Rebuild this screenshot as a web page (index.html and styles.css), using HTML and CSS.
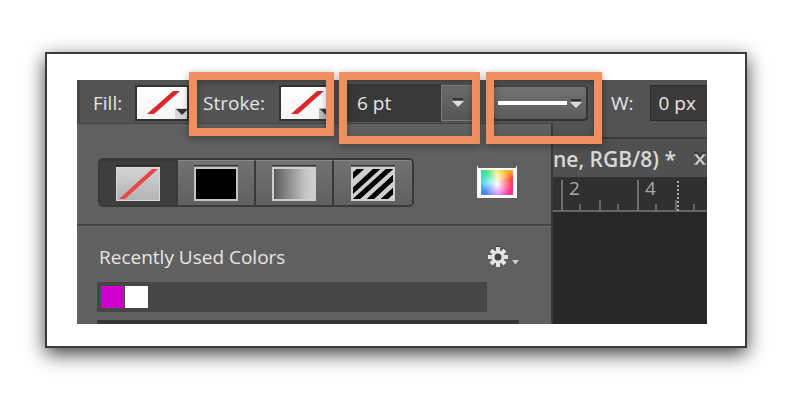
FILE: index.html
```html
<!DOCTYPE html>
<html lang="en">
<head>
    <meta charset="utf-8">
    <title>Stroke options</title>
    <link rel="stylesheet" href="styles.css">
</head>
<body>
    <main class="card">
        <div class="app">
            <div class="toolbar">
                <div class="field fill">
                    <label for="fillBtn">Fill:</label>
                    <button id="fillBtn" class="swatch-btn">
                        <svg width="53" height="32" viewBox="0 0 53 32">
                            <path d="M10 27L36 4h7L17 27z" fill="#d8282c"/>
                            <path d="M38 21h15v11H38z" fill="#d8d8d8"/>
                            <path d="M39 22h12l-6 6z" fill="#333"/>
                        </svg>
                    </button>
                </div>

                <div class="field stroke highlight">
                    <label for="strokeBtn">Stroke:</label>
                    <button id="strokeBtn" class="swatch-btn">
                        <svg width="53" height="32" viewBox="0 0 53 32">
                            <path d="M10 27L36 4h7L17 27z" fill="#d8282c"/>
                            <path d="M38 21h15v11H38z" fill="#bbb"/>
                            <path d="M39 22h12l-6 6z" fill="#333"/>
                        </svg>
                    </button>
                </div>

                <div class="field size highlight">
                    <input type="text" value="6 pt" aria-label="Stroke width">
                    <button class="size-btn" aria-label="Choose stroke width">
                        <svg width="14" height="10" viewBox="0 0 14 10">
                            <path d="M2 0h10v2H2z" fill="#333"/>
                            <path d="M1 3h12L7 9z" fill="#ddd"/>
                        </svg>
                    </button>
                </div>

                <div class="field line highlight">
                    <button class="line-btn" aria-label="Stroke type">
                        <svg width="86" height="12" viewBox="0 0 86 12">
                            <path d="M2 4h69v4H2z" fill="#fff"/>
                            <path d="M75 2h10v2H75z" fill="#333"/>
                            <path d="M74 5h12l-6 6z" fill="#ddd"/>
                        </svg>
                    </button>
                </div>

                <div class="field width">
                    <label for="shapeWidth">W:</label>
                    <input type="text" id="shapeWidth" value="0 px">
                </div>
            </div>

            <section class="panel">
                <div class="types">
                    <div class="type-group">
                        <button class="type active" aria-label="No color">
                            <svg width="44" height="36" viewBox="0 0 44 36">
                                <defs>
                                    <linearGradient id="none" x1="0" y1="0" x2="0" y2="1">
                                        <stop offset="0" stop-color="#d2d2d2"/>
                                        <stop offset="1" stop-color="#b4b4b4"/>
                                    </linearGradient>
                                </defs>
                                <path d="M0 0h44v1H0z" fill="#222"/>
                                <path d="M0 2h44v34H0z" fill="#d9d9d9"/>
                                <path d="M1 3h42v32H1z" fill="url(#none)"/>
                                <path d="M3 34L36 4h6L9 34z" fill="#e8474a"/>
                            </svg>
                        </button>
                        <button class="type" aria-label="Solid color">
                            <svg width="44" height="36" viewBox="0 0 44 36">
                                <path d="M0 0h44v1H0z" fill="#333"/>
                                <path d="M0 2h44v34H0z" fill="#c4c4c4"/>
                                <path d="M2 4h40v30H2z" fill="#000"/>
                            </svg>
                        </button>
                        <button class="type" aria-label="Gradient">
                            <svg width="44" height="36" viewBox="0 0 44 36">
                                <defs>
                                    <linearGradient id="grad">
                                        <stop offset="0" stop-color="#5c5c5c"/>
                                        <stop offset="0.8" stop-color="#c6c6c6"/>
                                        <stop offset="1" stop-color="#d0d0d0"/>
                                    </linearGradient>
                                </defs>
                                <path d="M0 0h44v1H0z" fill="#333"/>
                                <path d="M0 2h44v34H0z" fill="#cfcfcf"/>
                                <path d="M2 4h40v30H2z" fill="url(#grad)"/>
                            </svg>
                        </button>
                        <button class="type" aria-label="Pattern">
                            <svg width="44" height="36" viewBox="0 0 44 36">
                                <defs>
                                    <clipPath id="box"><path d="M2 4h40v30H2z"/></clipPath>
                                </defs>
                                <path d="M0 0h44v1H0z" fill="#333"/>
                                <path d="M0 2h44v34H0z" fill="#d0d0d0"/>
                                <g clip-path="url(#box)" stroke="#000" stroke-width="5">
                                    <path d="M-4 16L14 0M-4 31L30 0M1 38L44 -1M15 38L52 4M29 38L54 15"/>
                                </g>
                            </svg>
                        </button>
                    </div>
                    <button class="picker" aria-label="Color picker"><span class="spectrum"></span></button>
                </div>

                <div class="recent">
                    <div class="recent-head">
                        <h2>Recently Used Colors</h2>
                        <button class="gear" aria-label="Options">
                            <svg width="32" height="24" viewBox="0 0 32 24">
                                <g stroke="#333" stroke-width="4">
                                    <path d="M11 1v4M4 4l3 3M18 4l-3 3"/>
                                </g>
                                <g stroke="#e4e4e4" stroke-width="4">
                                    <path d="M11 2v5M11 17v5M1 12h5M16 12h5M4 5l4 4M14 15l4 4M18 5l-4 4M8 15l-4 4"/>
                                </g>
                                <circle cx="11" cy="12" r="5" fill="#444" stroke="#e4e4e4" stroke-width="3"/>
                                <path d="M25 15h7l-3 4h-1z" fill="#ccc"/>
                            </svg>
                        </button>
                    </div>
                    <div class="swatches">
                        <button class="swatch magenta" aria-label="Magenta"></button>
                        <button class="swatch white" aria-label="White"></button>
                    </div>
                    <div class="list"></div>
                </div>
            </section>

            <section class="document">
                <div class="tab">
                    <span>ne, RGB/8) *</span>
                    <button class="close" aria-label="Close">
                        <svg width="14" height="14" viewBox="0 0 14 14" fill="none">
                            <path d="M1 1h4l2 3 2-3h4" stroke="#2a2a2a"/>
                            <path d="M3 3l8 9M11 3l-8 9" stroke="#ccc" stroke-width="2"/>
                            <path d="M1 3h4M9 3h4M1 12h4M9 12h4" stroke="#ccc"/>
                        </svg>
                    </button>
                </div>
                <svg class="ruler" width="156" height="34">
                    <path d="M0 32h156v2H0z" fill="#666"/>
                    <path d="M9 2v30M85 2v30" stroke="#707070" stroke-width="2"/>
                    <path d="M27 26v6M47 22v10M65 26v6M103 26v6M123 22v10M141 26v6" stroke="#666" stroke-width="2"/>
                    <path d="M125 3v30" stroke="#aaa" stroke-width="2" stroke-dasharray="2 2"/>
                    <text x="16" y="17">2</text>
                    <text x="92" y="17">4</text>
                </svg>
                <div class="canvas"></div>
            </section>
        </div>
    </main>
</body>
</html>
```

FILE: styles.css
```css
*, *::before, *::after {
    box-sizing: border-box;
}
body {
    margin: 0;
    padding: 52px 46px 52px 45px;
    background: #fff;
    color: #e6e6e6;
    font-family: "Open Sans", "Noto Sans", sans-serif;
    font-size: 19px;
    line-height: 24px;
}
button, input {
    margin: 0;
    padding: 0;
    border: 0;
    border-radius: 0;
    background: none;
    color: inherit;
    font: inherit;
}
svg {
    display: block;
}
.card {
    padding: 26px 38px 22px 30px;
    border: 2px solid #3c3c3c;
    background: #fff;
    box-shadow: 0 6px 18px rgba(0, 0, 0, 0.75);
}

/* the popup panel covers the lower part of the toolbar */
.app {
    display: grid;
    grid-template-columns: 476px minmax(0, 1fr);
    grid-template-rows: 43px 16px 185px;
}

/* toolbar */
.toolbar {
    grid-area: 1 / 1 / 3 / 3;
    display: flex;
    align-items: flex-start;
    min-width: 0;
    padding-top: 4px;
    padding-left: 13px;
    border-left: 3px solid #484848;
    border-bottom: 2px solid #3a3a3a;
    background: #535353;
}
.field {
    display: flex;
    align-items: center;
    height: 38px;
}
.swatch-btn {
    flex: 1;
    height: 36px;
    border: 2px solid #333;
    background: linear-gradient(#fff, #f4f4f4);
    text-align: left;
    overflow: hidden;
}
.fill {
    width: 96px;
    gap: 13px;
}
.highlight {
    position: relative;
    z-index: 2;
}
.highlight::after {
    content: "";
    position: absolute;
    inset: -12px 0 auto;
    height: 72px;
    border: 8px solid #f09060;
    box-shadow: 0 2px 8px rgba(0, 0, 0, 0.35), inset 0 2px 6px rgba(0, 0, 0, 0.3);
    pointer-events: none;
}
.stroke {
    width: 145px;
    padding-left: 14px;
    gap: 14px;
}
.stroke::after {
    height: 64px;
}
.size {
    width: 141px;
    margin-left: 5px;
    padding: 0 6px;
}
.size input {
    width: 96px;
    height: 38px;
    padding-left: 12px;
    background: #383838;
}
.size-btn {
    display: flex;
    align-items: center;
    justify-content: center;
    flex: 1;
    height: 36px;
    border: 1px solid #7c7c7c;
    background: linear-gradient(#6a6a6a, #555);
}
.line {
    width: 116px;
    margin-left: 6px;
    padding-left: 6px;
}
.line-btn {
    width: 96px;
    height: 36px;
    padding-left: 2px;
    border: 2px solid #333;
    border-top-color: #444;
    border-radius: 4px;
    background: linear-gradient(#727272, #5c5c5c);
}
.width {
    flex: 1;
    min-width: 0;
    margin-left: 9px;
    gap: 16px;
}
.width input {
    flex: 1;
    min-width: 0;
    height: 36px;
    padding-left: 8px;
    border: 1px solid #2c2c2c;
    border-right: 0;
    background: #3a3a3a;
}

/* stroke panel */
.panel {
    grid-area: 2 / 1 / 4 / 2;
    border-top: 1px solid #444;
    border-right: 2px solid #3a3a3a;
    background: #606060;
}
.types {
    display: flex;
    align-items: center;
    justify-content: space-between;
    height: 102px;
    padding: 16px 34px 0 21px;
    border-bottom: 2px solid #444;
}
.type-group {
    display: flex;
    height: 49px;
    border: 2px solid #393939;
    border-radius: 5px;
    overflow: hidden;
}
.type {
    display: flex;
    align-items: center;
    justify-content: center;
    width: 78px;
    border-top: 1px solid #888;
    border-right: 2px solid #393939;
    background: linear-gradient(#727272, #606060);
}
.type:last-child {
    border-right: 0;
}
.type.active {
    border-top-color: #393939;
    background: #3e3e3e;
}
.picker {
    width: 40px;
    height: 32px;
    padding: 4px 3px 3px;
    border: solid #f4f4f4;
    border-width: 0 1px 1px;
    background: linear-gradient(#606060 2px, #fff 2px);
}
.spectrum {
    display: block;
    height: 25px;
    background:
        radial-gradient(circle at 50% 55%, #fff, rgba(255, 255, 255, 0) 70%),
        conic-gradient(from 0deg at 50% 50%, #f5f06a, #ffb430 45deg, #ff4038 80deg, #ff3098 130deg, #c070ff 180deg, #4880f0 230deg, #50dcf0 270deg, #40e098 310deg, #f5f06a);
}
.recent {
    padding: 18px 32px 0 20px;
    border-top: 1px solid #6e6e6e;
}
.recent-head {
    display: flex;
    align-items: center;
    justify-content: space-between;
    padding-left: 2px;
}
h2 {
    margin: 0;
    font-size: 19px;
    font-weight: 400;
}
.swatches {
    display: flex;
    gap: 1px;
    height: 30px;
    margin: 13px 32px 8px 0;
    padding: 4px;
    background: #464646;
}
.swatch {
    width: 23px;
    height: 22px;
}
.magenta {
    background: #cb00cb;
}
.white {
    background: #fff;
}
.list {
    height: 4px;
    background: #363636;
}

/* document window */
.document {
    grid-area: 3 / 2 / 4 / 3;
    display: flex;
    flex-direction: column;
    min-width: 0;
    overflow: hidden;
    background: #282828;
}
.tab {
    display: flex;
    align-items: center;
    justify-content: space-between;
    height: 39px;
    padding-top: 2px;
    border-bottom: 1px solid #333;
    background: #505050;
    color: #d8d8d8;
    font-size: 21px;
    font-weight: 600;
    white-space: nowrap;
}
.ruler {
    width: 100%;
    background: #303030;
    fill: #aaa;
}
.canvas {
    flex: 1;
    background: #282828;
}
```
